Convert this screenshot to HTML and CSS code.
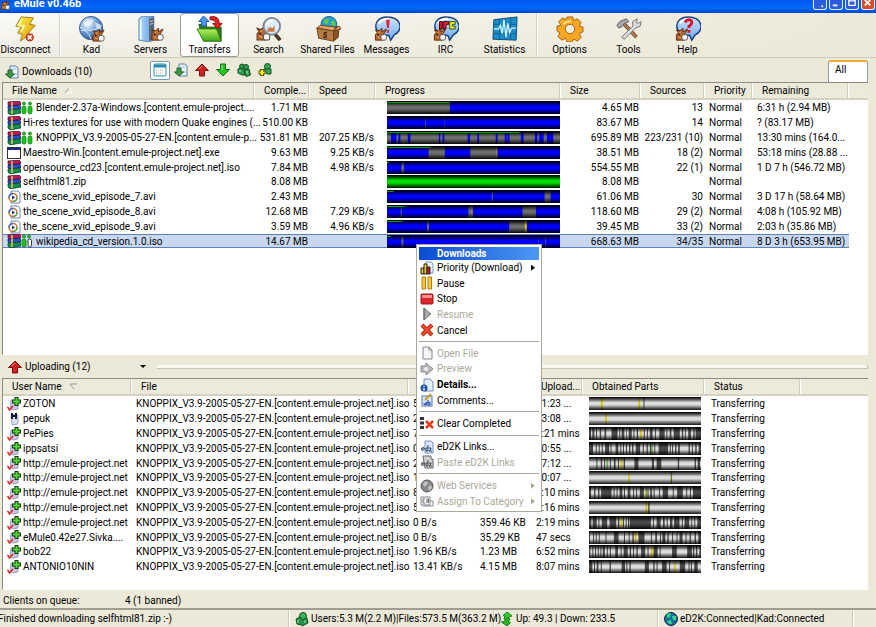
FILE: index.html
```html
<!DOCTYPE html>
<html lang="en">
<head>
    <meta charset="UTF-8">
    <meta name="viewport" content="width=device-width, initial-scale=1.0">
    <title>eMule v0.46b</title>
    <link rel="stylesheet" href="styles.css">
</head>
<body>

    <svg class="sprite" aria-hidden="true">
        <defs>
            <linearGradient id="gShade" x1="0" y1="0" x2="0" y2="1">
                <stop offset="0" stop-color="#000" stop-opacity="1"/>
                <stop offset="0.15" stop-color="#000" stop-opacity="0.7"/>
                <stop offset="0.42" stop-color="#000" stop-opacity="0"/>
                <stop offset="0.6" stop-color="#000" stop-opacity="0"/>
                <stop offset="0.9" stop-color="#000" stop-opacity="0.7"/>
                <stop offset="1" stop-color="#000" stop-opacity="0.9"/>
            </linearGradient>
            <linearGradient id="gBubble" x1="0" y1="0" x2="0" y2="1">
                <stop offset="0" stop-color="#cfe4ff"/>
                <stop offset="1" stop-color="#6fa8ee"/>
            </linearGradient>
            <linearGradient id="gBolt" x1="0" y1="0" x2="1" y2="1">
                <stop offset="0" stop-color="#fff04a"/>
                <stop offset="1" stop-color="#dc9a08"/>
            </linearGradient>
            <radialGradient id="gGlobe" cx="0.35" cy="0.3" r="0.8">
                <stop offset="0" stop-color="#fff"/>
                <stop offset="0.5" stop-color="#6c9fd8"/>
                <stop offset="1" stop-color="#1d4580"/>
            </radialGradient>
            <linearGradient id="gServer" x1="0" y1="0" x2="1" y2="0">
                <stop offset="0" stop-color="#b4dcff"/>
                <stop offset="1" stop-color="#5b9ade"/>
            </linearGradient>
            <linearGradient id="gFolder" x1="0" y1="0" x2="0" y2="1">
                <stop offset="0" stop-color="#baf060"/>
                <stop offset="1" stop-color="#3fa818"/>
            </linearGradient>
        </defs>
        <symbol id="mule" viewBox="0 0 14 15">
            <path d="M1 14 1 8 3 6 1 3 5 4 8 1 8 5 13 2 11 6 9 8 9 14z" fill="#b5662c" stroke="#5e2c10"/>
            <path d="M4 6 6 5M3 10 6 12" stroke="#f0b070" fill="none"/>
            <rect x="7" y="8" width="6" height="6" rx="2" fill="#f5f5f5" stroke="#555"/>
            <circle cx="4" cy="8" r="1" fill="#2c1204"/>
        </symbol>
        <symbol id="disconnect" viewBox="0 0 28 28">
            <path d="M9 1 22 2 18 9 24 10 16 19 18 20 8 27 10 20 5 18 9 12 3 11z" fill="url(#gBolt)" stroke="#a07c10"/>
            <path d="M10 3 6 10 12 11 9 17" stroke="#fffaa8" stroke-width="2" fill="none"/>
            <circle cx="18" cy="23" r="4" fill="#e8553c" stroke="#a02c1c"/>
            <path d="M16 21 20 25M20 21 16 25" stroke="#fff" stroke-width="1.5"/>
        </symbol>
        <symbol id="kad" viewBox="0 0 28 28">
            <circle cx="13" cy="13" r="12.5" fill="url(#gGlobe)" stroke="#31588c"/>
            <path d="M5 8Q10 2 16 4L13 10 7 12zM17 7 23 9 24 15 19 14z" fill="#e9f2fb" opacity="0.75"/>
            <path d="M2 16Q9 13 13 25M1 12Q13 20 25 10" stroke="#dceaf8" fill="none"/>
            <use href="#mule" x="14" y="13" width="14" height="15"/>
        </symbol>
        <symbol id="servers" viewBox="0 0 28 28">
            <path d="M1 3 5 0 17 0 17 25 13 28 1 26z" fill="url(#gServer)" stroke="#5d83ac"/>
            <path d="M12 3 17 1 17 25 12 27z" fill="#59636f"/>
            <path d="M13 6 16 5M13 9 16 8" stroke="#dfe8f0"/>
            <path d="M3 4 3 25" stroke="#e6f5ff" stroke-width="2"/>
            <use href="#mule" x="14" y="12" width="14" height="15"/>
        </symbol>
        <symbol id="transfers" viewBox="0 0 30 28">
            <path d="M3 9 10 9 12 12 27 12 27 27 8 27z" fill="#2c7d17" stroke="#1a540d"/>
            <path d="M1 14 22 14 27 27 8 27z" fill="url(#gFolder)" stroke="#317d12"/>
            <path d="M8 0 14 6 11 6 11 11 6 11 6 6 3 6z" fill="#4a9af0" stroke="#144d98"/>
            <path d="M15 1Q25-1 25 8L28 8 23 14 18 8 21 8Q21 4 15 4z" fill="#e12420" stroke="#8c0c0c"/>
        </symbol>
        <symbol id="search" viewBox="0 0 28 28">
            <use href="#mule" x="0" y="10" width="16" height="17"/>
            <path d="M20 19 26 26" stroke="#4a3428" stroke-width="4"/>
            <circle cx="17" cy="11" r="9" fill="#d7eaff" fill-opacity="0.8" stroke="#7c8793" stroke-width="2"/>
            <path d="M12 9Q14 5 18 5" stroke="#fff" stroke-width="2" fill="none"/>
            <path d="M12 17 14 12 18 13 20 10 20 17z" fill="#c77b44"/>
        </symbol>
        <symbol id="shared" viewBox="0 0 28 28">
            <circle cx="15" cy="9" r="8.500" fill="#2a9fd0" stroke="#165a80"/>
            <path d="M10 4 15 3 14 8 10 9zM17 6 21 5 22 10 18 11z" fill="#60cc4a"/>
            <path d="M2 13 20 16 20 27 4 24z" fill="#b87a45" stroke="#6b3c18"/>
            <path d="M20 16 26 12 25 23 20 27z" fill="#8a5228" stroke="#6b3c18"/>
            <path d="M2 13 6 10 24 12 20 16zM20 16 28 14 26 11 22 12z" fill="#dda66d" stroke="#6b3c18"/>
            <path d="M13 18Q9 17 10 20 13 20 12 23 11 24 9 22" stroke="#3f220c" stroke-width="1.500" fill="none"/>
        </symbol>
        <symbol id="bubble" viewBox="0 0 28 28">
            <path d="M14 1C31 1 31 17 22 20L18 26 16 21C-3 21-2 1 14 1z" fill="url(#gBubble)" stroke="#123f7c" stroke-width="1.500"/>
            <path d="M5 8Q9 3 16 3" stroke="#fff" stroke-width="2" fill="none"/>
            <use href="#mule" x="0" y="12" width="15" height="15"/>
        </symbol>
        <symbol id="messages" viewBox="0 0 28 28">
            <use href="#bubble" width="28" height="28"/>
            <path d="M13 4 17 4 16 13 14 13zM14 15h2v3h-2z" fill="#e0203c"/>
        </symbol>
        <symbol id="irc" viewBox="0 0 28 28">
            <use href="#bubble" width="28" height="28"/>
            <path d="M7 6h3v8h-3z" fill="#d81c24" stroke="#400"/>
            <path d="M11 6h6v3h-3v5h-3z" fill="#e23" stroke="#400"/>
            <path d="M18 6h6v3h-3v2h3v3h-6z" fill="#f5e81c" stroke="#252"/>
        </symbol>
        <symbol id="statistics" viewBox="0 0 28 28">
            <path d="M2 4 27 1 26 26 1 25z" fill="#1c8dc8" stroke="#0d4770"/>
            <path d="M8 3v22M14 3v22M20 2v23M2 9h24M2 19h24" stroke="#0e5f96"/>
            <path d="M2 14 7 14 9 10 11 19 13 4 15 23 17 8 19 18 21 13 26 13" stroke="#c8f4ff" stroke-width="1.500" fill="none"/>
        </symbol>
        <symbol id="options" viewBox="0 0 28 28">
            <g fill="#f5a623" stroke="#a35a08">
                <path d="M11 1h6l1 4 4-2 4 4-2 4 4 1v5l-4 2 2 4-4 4-4-2-2 3h-5l-2-4-4 2-4-4 2-4-3-2v-5l4-1-2-4 4-4 4 2z"/>
                <circle cx="14" cy="14" r="5" fill="#f0eee0"/>
            </g>
            <path d="M7 9Q10 5 15 6" stroke="#ffe08c" stroke-width="2" fill="none"/>
        </symbol>
        <symbol id="tools" viewBox="0 0 28 28">
            <path d="M9 9 22 23" stroke="#6a4020" stroke-width="4"/>
            <path d="M9 9 22 23" stroke="#b9855a" stroke-width="2"/>
            <path d="M1 10 4 6 11 3 14 6 9 8 6 12 3 13z" fill="#a8a8ac" stroke="#5c5c60"/>
            <path d="M6 23 18 11 18 6 23 3 22 7 24 8 27 6 26 11 21 13 9 25z" fill="#dcdce0" stroke="#707074"/>
        </symbol>
        <symbol id="help" viewBox="0 0 28 28">
            <use href="#bubble" width="28" height="28"/>
            <path d="M11 7Q12 4 15 4 19 5 18 8 17 10 15 11V13M15 15v3" stroke="#e01028" stroke-width="3" fill="none"/>
        </symbol>

        <symbol id="doc-down" viewBox="0 0 14 14">
            <path d="M5 1h6l2 2v10H5z" fill="#eaf2fc" stroke="#5f7fae"/>
            <path d="M7 4h4M8 9h4" stroke="#9cb8de"/>
            <path d="M3 5h4v4h2.500L5 13 .5 9H3z" fill="#3f9a48" stroke="#1a5f24"/>
        </symbol>
        <symbol id="list" viewBox="0 0 14 14">
            <rect x="1" y="1" width="12" height="12" rx="1" fill="#fff" stroke="#2c8cae"/>
            <path d="M1 3h12" stroke="#2c8cae" stroke-width="3"/>
            <path d="M3 7h8M3 10h8" stroke="#90b8c8" stroke-dasharray="1 1"/>
        </symbol>
        <symbol id="up" viewBox="0 0 14 14">
            <path d="M7 1 13.500 7.500H9.500V13H4.500V7.500H.5z" fill="#cf2020" stroke="#7c1010"/>
            <path d="M7 3 4 6" stroke="#ff8c80"/>
        </symbol>
        <symbol id="down" viewBox="0 0 14 14">
            <path d="M7 13 13.500 6.500H9.500V1H4.500V6.500H.5z" fill="#26c426" stroke="#167016"/>
            <path d="M6 2V7" stroke="#94f084"/>
        </symbol>
        <symbol id="clients" viewBox="0 0 14 14">
            <g fill="#2f9c4c" stroke="#124f24">
                <circle cx="5" cy="3.500" r="2.500"/><circle cx="9" cy="4" r="2.500"/>
                <path d="M1 6 5 5 8 8 8 12H5L1 10zM7 7 12 6 13.500 12 9 13.500z"/>
            </g>
            <path d="M3 7v2M10 8v3" stroke="#a4e8b0"/>
        </symbol>
        <symbol id="client-add" viewBox="0 0 14 14">
            <circle cx="9.500" cy="3.500" r="3" fill="#38a854" stroke="#124f24"/>
            <path d="M6 6h7v5H9z" fill="#38a854" stroke="#124f24"/>
            <path d="M4 6v7M.5 9.500h7" stroke="#5b5a10" stroke-width="4"/>
            <path d="M4 7v5M1.500 9.500h5" stroke="#f4ec20" stroke-width="2"/>
        </symbol>
        <symbol id="user" viewBox="0 0 14 14">
            <circle cx="8" cy="4" r="3.500" fill="#3bb45c" stroke="#10501f"/>
            <path d="M1 7 5 5 8 8 12 6 13 11 8 13.500 2 12z" fill="#279046" stroke="#10501f"/>
            <path d="M3 8v3M10 8v3" stroke="#96e4a4"/>
        </symbol>
        <symbol id="updown" viewBox="0 0 14 14">
            <path d="M7 0 12 4 9.500 4.500 7 8 4 7 5 4 3 3.500z" fill="#2ed02e" stroke="#117c11"/>
            <path d="M7 14 1.500 10 4 9.500 7 5.500 10 7 8 10 10.500 10.500z" fill="#23bb23" stroke="#117c11"/>
        </symbol>
        <symbol id="world" viewBox="0 0 14 14">
            <circle cx="7" cy="7" r="6.500" fill="#1c6a9c" stroke="#0b2c40"/>
            <path d="M3 2 7 1 6 5 3 6zM8 4 12 4 12 8 9 8zM3 9 7 8 8 12 5 12z" fill="#2fd888"/>
        </symbol>

        <symbol id="rar" viewBox="0 0 14 14">
            <path d="M1 1 12 0 14 2V4L3 5 1 4z" fill="#b81c58" stroke="#400820" stroke-width=".7"/>
            <path d="M1 5 12 4 14 6V8L3 9 1 8z" fill="#2c50c0" stroke="#081440" stroke-width=".7"/>
            <path d="M1 9 12 8 14 10V12L3 14 1 12z" fill="#148c4c" stroke="#04381c" stroke-width=".7"/>
            <path d="M5 1v12" stroke="#e8c868" stroke-width="1.500"/>
        </symbol>
        <symbol id="exe" viewBox="0 0 14 14">
            <rect x=".5" y="1.500" width="13" height="11" fill="#fff" stroke="#333"/>
            <path d="M1 3h12" stroke="#182c90" stroke-width="2"/>
        </symbol>
        <symbol id="avi" viewBox="0 0 14 14">
            <path d="M4 1h7l2 2v10H4z" fill="#fff" stroke="#6c84b8"/>
            <circle cx="6" cy="7.500" r="4" fill="#fff" stroke="#d06c28" stroke-width="1.500"/>
            <path d="M2 7.500A4 4 0 0 1 6 3.500" stroke="#2f70d8" stroke-width="1.500" fill="none"/>
            <path d="M10 7.500A4 4 0 0 1 6 11.500" stroke="#3aa838" stroke-width="1.500" fill="none"/>
            <path d="M5 5.500 8 7.500 5 9.500z" fill="#202c60"/>
        </symbol>
        <symbol id="rated" viewBox="0 0 12 14">
            <g fill="#18c818" stroke="#087008" stroke-width=".7">
                <circle cx="3" cy="2.500" r="1.500"/><rect x="1" y="5" width="4" height="8" rx="2"/>
                <circle cx="9" cy="2.500" r="1.500"/><rect x="7" y="5" width="4" height="8" rx="2"/>
            </g>
        </symbol>
        <symbol id="rated-half" viewBox="0 0 12 14">
            <g fill="#18c818" stroke="#087008" stroke-width=".7">
                <circle cx="3" cy="2.500" r="1.500"/><rect x="1" y="5" width="4" height="8" rx="2"/>
                <circle cx="8" cy="2.500" r="1.500"/>
            </g>
            <rect x="7" y="5" width="3.500" height="8" rx="1.700" fill="#fff" stroke="#333"/>
        </symbol>
        <symbol id="peer" viewBox="0 0 14 14">
            <path d="M4 3 11 4 11 12 6 13 3 11z" fill="#c4c6e4" stroke="#8486a8" stroke-width=".7"/>
            <path d="M9.500 0v9M5 4.500h9" stroke="#0c3c0c" stroke-width="4"/>
            <path d="M9.500 1v7M6 4.500h7" stroke="#58d838" stroke-width="2"/>
            <path d="M.5 10 2.500 13 6 9" stroke="#e02020" stroke-width="1.500" fill="none"/>
        </symbol>
        <symbol id="peer-h" viewBox="0 0 14 14">
            <path d="M4 2 11 3 11 12 5 13z" fill="#d4dcf0" stroke="#8890b0" stroke-width=".7"/>
            <path d="M5 1v6M9 1v6M5 4h4" stroke="#181830" stroke-width="2"/>
        </symbol>

        <symbol id="m-priority" viewBox="0 0 14 14">
            <path d="M6 1h5l2 2v9H6z" fill="#eef4fc" stroke="#7894c0"/>
            <path d="M1 7h3v6H1z" fill="#e8c020" stroke="#222"/><path d="M4 3h3v10H4z" fill="#f0d030" stroke="#222"/><path d="M7 6h3v7H7z" fill="#b02030" stroke="#222"/>
        </symbol>
        <symbol id="m-pause" viewBox="0 0 14 14">
            <path d="M2 1h3.500v12H2zM8 1h3.500v12H8z" fill="#f8c838" stroke="#b47c10"/>
        </symbol>
        <symbol id="m-stop" viewBox="0 0 14 14">
            <rect x="1" y="2" width="12" height="10" rx="1" fill="#d8282c" stroke="#981418"/>
            <path d="M2 4.500h10" stroke="#f89090" stroke-width="3"/>
        </symbol>
        <symbol id="m-resume" viewBox="0 0 14 14">
            <path d="M4 1 11 7 4 13z" fill="#aaa" stroke="#777"/><path d="M4 1v12" stroke="#666"/>
        </symbol>
        <symbol id="m-cancel" viewBox="0 0 14 14">
            <path d="M2 2 12 12M12 2 2 12" stroke="#982010" stroke-width="4"/>
            <path d="M2 2 12 12M12 2 2 12" stroke="#f04828" stroke-width="2.500"/>
        </symbol>
        <symbol id="m-open" viewBox="0 0 14 14">
            <path d="M3 1h6l3 3v9H3z" fill="#f4f4f4" stroke="#888"/><path d="M9 1v3h3" fill="none" stroke="#888"/>
        </symbol>
        <symbol id="m-preview" viewBox="0 0 14 14">
            <path d="M1 4h5V1l7 6-7 6v-3H1z" fill="#bbb" stroke="#888"/><circle cx="6" cy="7" r="2" fill="#eee"/>
        </symbol>
        <symbol id="m-details" viewBox="0 0 14 14">
            <path d="M4 1h6l3 3v9H4z" fill="#e4eefc" stroke="#6c8cc0"/>
            <circle cx="4" cy="10" r="3.500" fill="#1c50a8"/><path d="M4 8v1M4 10v2.500" stroke="#fff" stroke-width="1.500"/>
        </symbol>
        <symbol id="m-comments" viewBox="0 0 14 14">
            <rect x="2" y="3" width="10" height="10" fill="#d4e4fa" stroke="#5478b4"/>
            <path d="M4 10a1.500 1.500 0 1 0 2-1v3M8 7v5M8 9.500h2v2.500H8" stroke="#1c409c" fill="none"/>
            <path d="M5 7 11 1" stroke="#c89c20" stroke-width="2"/>
        </symbol>
        <symbol id="m-clear" viewBox="0 0 14 14">
            <path d="M0 1h4v3H0zM0 5.500h4v3H0zM0 10h4v3H0z" fill="#333"/>
            <path d="M6 5 13 12M13 5 6 12" stroke="#e03c1c" stroke-width="2.500"/>
        </symbol>
        <symbol id="m-links" viewBox="0 0 14 14">
            <path d="M5 1h6l2 2v10H5z" fill="#dce8fa" stroke="#7490c0"/>
            <path d="M1 9h3.500a1.500 1.500 0 1 0-1 1.500M8 5v6H6V8h2M9 8h2v1l-2 2h3" stroke="#283c68" fill="none"/>
        </symbol>
        <symbol id="m-paste" viewBox="0 0 14 14">
            <path d="M3 1h8v3h2v9H5z" fill="#d0d0d0" stroke="#666"/>
            <path d="M1 9h3.500a1.500 1.500 0 1 0-1 1.500M8 5v6H6V8h2M9 8h2v1l-2 2h3" stroke="#444" fill="none"/>
        </symbol>
        <symbol id="m-web" viewBox="0 0 14 14">
            <circle cx="7" cy="7" r="6" fill="#888" stroke="#555"/>
            <path d="M3 4 7 2 8 5 4 8zM8 8 11 6 12 9 9 12z" fill="#c4c4c4"/>
        </symbol>
        <symbol id="m-category" viewBox="0 0 14 14">
            <path d="M1 3h9v8H1z" fill="#eee" stroke="#888"/><path d="M10 7h3v5H3" fill="none" stroke="#888"/>
            <path d="M5 5H3v4h2M7 9V5h1.500v4M7 7h1" stroke="#777" fill="none"/>
        </symbol>
    </svg>

    <header class="titlebar">
        <svg class="title-icon"><use href="#mule"/></svg>
        <h1>eMule v0.46b</h1>
        <div class="window-buttons">
            <button type="button" aria-label="Tray"><svg viewBox="0 0 13 10"><path d="M8 7h2" stroke="#fff" stroke-width="2"/></svg></button>
            <button type="button" aria-label="Minimize"><svg viewBox="0 0 13 10"><path d="M3 6h5" stroke="#fff" stroke-width="2"/></svg></button>
            <button type="button" aria-label="Maximize"><svg viewBox="0 0 13 10"><path d="M3 0v6h7v-6M3 1h7" stroke="#fff" stroke-width="1.500" fill="none"/></svg></button>
            <button type="button" class="close" aria-label="Close"><svg viewBox="0 0 13 10"><path d="M3 0 9 6M9 0 3 6" stroke="#fff" stroke-width="2"/></svg></button>
        </div>
    </header>

    <nav class="toolbar">
        <button type="button" class="connect"><svg><use href="#disconnect"/></svg>Disconnect</button>
        <span class="divider"></span>
        <button type="button"><svg><use href="#kad"/></svg>Kad</button>
        <button type="button"><svg><use href="#servers"/></svg>Servers</button>
        <button type="button" class="active"><svg><use href="#transfers"/></svg>Transfers</button>
        <button type="button"><svg><use href="#search"/></svg>Search</button>
        <button type="button"><svg><use href="#shared"/></svg>Shared Files</button>
        <button type="button"><svg><use href="#messages"/></svg>Messages</button>
        <button type="button"><svg><use href="#irc"/></svg>IRC</button>
        <button type="button"><svg><use href="#statistics"/></svg>Statistics</button>
        <span class="divider wide"></span>
        <button type="button"><svg><use href="#options"/></svg>Options</button>
        <button type="button"><svg><use href="#tools"/></svg>Tools</button>
        <button type="button"><svg><use href="#help"/></svg>Help</button>
    </nav>

    <main class="transfer-window">
        <div class="list-bar">
            <h2><svg class="icon"><use href="#doc-down"/></svg>Downloads (10)</h2>
            <div class="view-buttons">
                <button type="button" class="active" aria-label="Split view"><svg class="icon"><use href="#list"/></svg></button>
                <button type="button" aria-label="Downloads"><svg class="icon"><use href="#doc-down"/></svg></button>
                <button type="button" aria-label="Uploading"><svg class="icon"><use href="#up"/></svg></button>
                <button type="button" aria-label="Downloading clients"><svg class="icon"><use href="#down"/></svg></button>
                <button type="button" aria-label="On queue"><svg class="icon"><use href="#clients"/></svg></button>
                <button type="button" aria-label="Known clients"><svg class="icon"><use href="#client-add"/></svg></button>
            </div>
            <button type="button" class="tab">All</button>
        </div>

        <section class="list downloads">
            <table>
                <colgroup>
                    <col class="c-name"><col class="c-completed"><col class="c-speed"><col class="c-progress">
                    <col class="c-size"><col class="c-sources"><col class="c-priority"><col class="c-remaining"><col>
                </colgroup>
                <thead>
                    <tr>
                        <th>File Name <svg class="sort" viewBox="0 0 7 7"><path d="M0 6 4 1" stroke="#999"/><path d="M4 1 7 6H1" stroke="#fff" fill="none"/></svg></th>
                        <th>Comple...</th>
                        <th>Speed</th>
                        <th>Progress</th>
                        <th>Size</th>
                        <th>Sources</th>
                        <th>Priority</th>
                        <th>Remaining</th>
                        <th></th>
                    </tr>
                </thead>
                <tbody id="downloadRows"></tbody>
            </table>
        </section>

        <div class="splitter">
            <h2><svg class="icon"><use href="#up"/></svg>Uploading (12)</h2>
            <button type="button" class="drop" aria-label="Switch list"></button>
            <span class="grip"></span>
        </div>

        <section class="list uploads">
            <table>
                <colgroup>
                    <col class="u-name"><col class="u-file"><col class="u-speed"><col class="u-sent">
                    <col class="u-time"><col class="u-parts"><col class="u-status"><col>
                </colgroup>
                <thead>
                    <tr>
                        <th>User Name <svg class="sort" viewBox="0 0 7 7"><path d="M4 6 0 1H7" stroke="#999" fill="none"/></svg></th>
                        <th>File</th>
                        <th>Speed</th>
                        <th>Transf...</th>
                        <th>Upload...</th>
                        <th>Obtained Parts</th>
                        <th>Status</th>
                        <th></th>
                    </tr>
                </thead>
                <tbody id="uploadRows"></tbody>
            </table>
        </section>

        <div class="queue">
            <span class="queue-label">Clients on queue:</span>
            <span>4 (1 banned)</span>
        </div>
    </main>

    <footer class="statusbar">
        <span class="status-log">Finished downloading selfhtml81.zip :-)</span>
        <span class="status-users"><svg class="icon"><use href="#user"/></svg>Users:5.3 M(2.2 M)|Files:573.5 M(363.2 M)</span>
        <span class="status-rate"><svg class="icon"><use href="#updown"/></svg>Up: 49.3 | Down: 233.5</span>
        <span class="status-net"><svg class="icon"><use href="#world"/></svg>eD2K:Connected|Kad:Connected</span>
        <span class="status-end"></span>
    </footer>

    <div class="menu" role="menu">
        <div class="menu-title">Downloads</div>
        <button type="button" class="sub"><svg class="icon"><use href="#m-priority"/></svg>Priority (Download)</button>
        <button type="button"><svg class="icon"><use href="#m-pause"/></svg>Pause</button>
        <button type="button"><svg class="icon"><use href="#m-stop"/></svg>Stop</button>
        <button type="button" disabled><svg class="icon"><use href="#m-resume"/></svg>Resume</button>
        <button type="button"><svg class="icon"><use href="#m-cancel"/></svg>Cancel</button>
        <hr>
        <button type="button" disabled><svg class="icon"><use href="#m-open"/></svg>Open File</button>
        <button type="button" disabled><svg class="icon"><use href="#m-preview"/></svg>Preview</button>
        <button type="button" class="default"><svg class="icon"><use href="#m-details"/></svg>Details...</button>
        <button type="button"><svg class="icon"><use href="#m-comments"/></svg>Comments...</button>
        <hr>
        <button type="button"><svg class="icon"><use href="#m-clear"/></svg>Clear Completed</button>
        <hr>
        <button type="button"><svg class="icon"><use href="#m-links"/></svg>eD2K Links...</button>
        <button type="button" disabled><svg class="icon"><use href="#m-paste"/></svg>Paste eD2K Links</button>
        <hr>
        <button type="button" class="sub" disabled><svg class="icon"><use href="#m-web"/></svg>Web Services</button>
        <button type="button" class="sub" disabled><svg class="icon"><use href="#m-category"/></svg>Assign To Category</button>
    </div>

    <script src="script.js"></script>
</body>
</html>
```

FILE: styles.css
```css
* {
    box-sizing: border-box;
}
body {
    display: flex;
    flex-direction: column;
    min-height: 100vh;
    margin: 0;
    overflow: hidden;
    background-color: #ece9d8;
    color: #000;
    font-family: Roboto, Tahoma, "DejaVu Sans Condensed", sans-serif;
    font-size: 10px;
    line-height: 13px;
    white-space: nowrap;
}
button {
    margin: 0;
    padding: 0;
    border: none;
    background: none;
    color: inherit;
    font: inherit;
    white-space: nowrap;
}
h2 {
    display: flex;
    align-items: center;
    gap: 3px;
    margin: 0;
    font-size: 10px;
    font-weight: normal;
}
.sprite {
    position: absolute;
    width: 0;
    height: 0;
}
.icon {
    flex: none;
    width: 14px;
    height: 14px;
}

/* title bar */
.titlebar {
    display: flex;
    align-items: flex-start;
    height: 13px;
    background: linear-gradient(#0058ee, #0068ff 60%, #0048c8);
    overflow: hidden;
}
.title-icon {
    width: 11px;
    height: 10px;
}
.titlebar h1 {
    flex: 1;
    margin: 0 0 0 3px;
    color: #fff;
    font-size: 11px;
    line-height: 8px;
}
.window-buttons {
    display: flex;
    gap: 2px;
    margin-right: 1px;
}
.window-buttons button {
    width: 14px;
    height: 10px;
    border: 1px solid #e4ecff;
    border-top: none;
    border-radius: 0 0 3px 3px;
    background-color: #2c5cdc;
}
.window-buttons .close {
    background-color: #dc4c24;
}
.window-buttons svg {
    display: block;
    width: 12px;
    height: 9px;
}

/* main toolbar */
.toolbar {
    display: flex;
    height: 45px;
    border-bottom: 1px solid #d0ccba;
    background: linear-gradient(90deg, rgba(236, 233, 216, 0), #ece9d8), linear-gradient(#fbfbf8, #efede2);
}
.toolbar button {
    display: flex;
    flex: none;
    flex-direction: column;
    align-items: center;
    width: 59px;
    padding-top: 2px;
    border: 1px solid transparent;
}
.toolbar .connect {
    width: 51px;
    margin-right: 8px;
}
.toolbar .active {
    border-color: #9c9c94;
    border-radius: 3px;
    background-color: #fff;
}
.toolbar svg {
    width: 30px;
    height: 27px;
    margin-bottom: 1px;
}
.divider {
    width: 2px;
    margin: 1px 1px 1px 0;
    border-left: 1px solid #d4d0c0;
    border-right: 1px solid #fff;
}
.toolbar .wide {
    margin: 1px 2px;
}

/* transfer window */
.transfer-window {
    display: flex;
    flex: 1;
    flex-direction: column;
    padding: 0 8px 0 2px;
}
.list-bar {
    display: flex;
    align-items: center;
    height: 24px;
    padding-left: 3px;
}
.list-bar h2 {
    width: 145px;
    padding-top: 3px;
}
.view-buttons {
    display: flex;
    gap: 1px;
    flex: 1;
}
.view-buttons button {
    display: grid;
    place-items: center;
    width: 20px;
    height: 19px;
}
.view-buttons .active {
    border: 1px solid #7c98b8;
    border-radius: 2px;
    background-color: #fff;
}
.tab {
    align-self: flex-end;
    width: 40px;
    height: 22px;
    padding: 0 6px 6px;
    border: 1px solid #919b9c;
    border-top: 2px solid #f0a838;
    border-bottom: none;
    border-radius: 3px 3px 0 0;
    background-color: #fff;
    text-align: left;
}
.list {
    border: 1px solid #8c8c84;
    border-right: none;
    border-bottom-color: #fff;
    background-color: #fff;
}
.downloads {
    flex: 1;
}
.uploads {
    padding-bottom: 15px;
}
table {
    width: 100%;
    border-collapse: separate;
    border-spacing: 0;
    table-layout: fixed;
}
.c-name { width: 252px; }
.c-completed { width: 55px; }
.c-speed { width: 66px; }
.c-progress { width: 185px; }
.c-size { width: 80px; }
.c-sources { width: 64px; }
.c-priority { width: 48px; }
.c-remaining { width: 96px; }
.u-name { width: 129px; }
.u-file { width: 277px; }
.u-speed { width: 67px; }
.u-sent { width: 56px; }
.u-time { width: 51px; }
.u-parts { width: 122px; }
.u-status { width: 96px; }
th {
    height: 17px;
    padding: 0 0 0 9px;
    border-bottom: 2px solid #d6d2c2;
    background-color: #ebeadb;
    box-shadow: inset -1px 0 #fff, inset -2px 0 #cfccbc;
    font-weight: normal;
    text-align: left;
}
th:last-child {
    box-shadow: none;
}
.sort {
    width: 7px;
    height: 7px;
    margin-left: 6px;
}
td {
    height: 15px;
    padding: 0 4px;
}
tr:nth-child(5n) td {
    height: 14px;
}
.num {
    padding: 0 2px;
    text-align: right;
}
.named {
    display: flex;
    align-items: center;
    gap: 2px;
    height: 14px;
}
.named .rating {
    width: 12px;
    margin: 0 1px 0 -2px;
}
.bar-cell {
    padding: 0 1px 0 11px;
}
.uploads .bar-cell {
    padding: 0 4px 0 6px;
}
.bar {
    display: block;
    width: 100%;
    height: 13px;
}
.status {
    padding-left: 6px;
}
.selected td {
    background-color: #c8d8f0;
    box-shadow: inset 0 1px #5c80c0, inset 0 -1px #5c80c0;
}
.splitter {
    display: flex;
    align-items: center;
    height: 23px;
    padding-left: 6px;
}
.splitter h2 {
    width: 132px;
}
.drop {
    width: 6px;
    height: 3px;
    background-color: #000;
    clip-path: polygon(0 0, 100% 0, 50% 100%);
}
.grip {
    flex: 1;
    height: 4px;
    margin-left: 11px;
    border: 1px solid #c8c4b4;
    border-width: 0 1px 1px 0;
    background-color: #f8f7f0;
}
.queue {
    display: flex;
    padding: 4px 1px 1px;
}
.queue-label {
    width: 122px;
}

/* status bar */
.statusbar {
    display: flex;
    height: 19px;
    border-top: 2px solid #a09e90;
    overflow: hidden;
}
.statusbar span {
    display: flex;
    flex: none;
    align-items: center;
    gap: 2px;
    padding-left: 5px;
    border-right: 1px solid #fff;
    box-shadow: inset -1px 0 #cfccbc;
}
.statusbar .status-log {
    width: 290px;
    padding: 0;
    text-indent: -2px;
}
.status-users { width: 205px; }
.status-rate { width: 164px; }
.status-net { width: 195px; }
.statusbar .status-end {
    flex: 1;
    border: none;
    box-shadow: none;
}

/* context menu */
.menu {
    position: absolute;
    top: 244px;
    left: 416px;
    display: flex;
    flex-direction: column;
    width: 126px;
    height: 268px;
    padding: 2px;
    border: 1px solid #aca899;
    background-color: #fff;
}
.menu-title {
    height: 13px;
    padding-left: 18px;
    background: linear-gradient(90deg, #0a4cd0, #4c98f4);
    color: #fff;
    font-weight: bold;
}
.menu button {
    display: flex;
    flex: 2;
    align-items: center;
    gap: 3px;
    min-height: 0;
    padding-left: 1px;
    text-align: left;
}
.menu button:disabled {
    color: #aca899;
}
.menu .default {
    font-weight: bold;
}
.menu .sub::after {
    width: 4px;
    height: 6px;
    margin: 0 4px 0 auto;
    background-color: currentColor;
    clip-path: polygon(0 0, 100% 50%, 0 100%);
    content: "";
}
.menu hr {
    flex: 1;
    width: 100%;
    margin: 0;
    border: none;
    background: linear-gradient(#aca899, #aca899) center / 100% 1px no-repeat;
}
```

FILE: script.js
```js
const BLUE = '#0000ff', GRAY = '#6c6c6c', YELLOW = '#d8c800', DARK = '#484848', GREEN = '#6fae50';

// segments are [start, width, color]; "done" is the length of the green line on top
const downloads = [
    { icon: 'rar', rating: 'rated', name: 'Blender-2.37a-Windows.[content.emule-project....', completed: '1.71 MB', speed: '', size: '4.65 MB', sources: '13', remaining: '6:31 h (2.94 MB)', done: 188, parts: [[0, 188, GRAY]] },
    { icon: 'rar', name: 'Hi-res textures for use with modern Quake engines (...', completed: '510.00 KB', speed: '', size: '83.67 MB', sources: '14', remaining: '? (83.17 MB)', done: 0, parts: [[114, 2, GRAY], [172, 1, GRAY]] },
    { icon: 'rar', rating: 'rated', name: 'KNOPPIX_V3.9-2005-05-27-EN.[content.emule-p...', completed: '531.81 MB', speed: '207.25 KB/s', size: '695.89 MB', sources: '223/231 (10)', remaining: '13:30 mins (164.0...', done: 395, parts: [[0, 12, GRAY], [28, 6, GRAY], [40, 22, GRAY], [70, 85, GRAY], [159, 7, GRAY], [171, 70, GRAY], [248, 22, GRAY], [275, 50, GRAY], [330, 22, GRAY], [358, 2, GRAY], [366, 34, GRAY], [408, 34, GRAY], [449, 6, GRAY], [468, 10, GRAY], [497, 20, GRAY]] },
    { icon: 'exe', name: 'Maestro-Win.[content.emule-project.net].exe', completed: '9.63 MB', speed: '9.25 KB/s', size: '38.51 MB', sources: '18 (2)', remaining: '53:18 mins (28.88 ...', done: 128, parts: [[124, 49, GRAY], [249, 82, GRAY], [326, 3, '#a08060']] },
    { icon: 'rar', name: 'opensource_cd23.[content.emule-project.net].iso', completed: '7.84 MB', speed: '4.98 KB/s', size: '554.55 MB', sources: '22 (1)', remaining: '1 D 7 h (546.72 MB)', done: 6, parts: [[43, 8, GRAY]] },
    { icon: 'rar', name: 'selfhtml81.zip', completed: '8.08 MB', speed: '', size: '8.08 MB', sources: '', remaining: '', done: 0, parts: [[0, 517, '#00e000']] },
    { icon: 'avi', name: 'the_scene_xvid_episode_7.avi', completed: '2.43 MB', speed: '', size: '61.06 MB', sources: '30', remaining: '3 D 17 h (58.64 MB)', done: 20, parts: [[313, 3, GRAY], [471, 18, GRAY]] },
    { icon: 'avi', name: 'the_scene_xvid_episode_8.avi', completed: '12.68 MB', speed: '7.29 KB/s', size: '118.60 MB', sources: '29 (2)', remaining: '4:08 h (105.92 MB)', done: 54, parts: [[41, 3, GRAY], [243, 14, GRAY], [252, 3, '#b09040'], [405, 40, GRAY]] },
    { icon: 'avi', name: 'the_scene_xvid_episode_9.avi', completed: '3.59 MB', speed: '4.96 KB/s', size: '39.45 MB', sources: '33 (2)', remaining: '2:03 h (35.86 MB)', done: 46, parts: [[121, 3, YELLOW], [365, 46, GRAY], [411, 7, YELLOW]] },
    { icon: 'rar', rating: 'rated-half', name: 'wikipedia_cd_version.1.0.iso', completed: '14.67 MB', speed: '', size: '668.63 MB', sources: '34/35', remaining: '8 D 3 h (653.95 MB)', done: 10, parts: [[43, 6, GRAY], [452, 1, GRAY], [473, 2, GRAY]], selected: true }
];

// stripes: dark areas as flat list of start, width pairs
const uploads = [
    { name: 'ZOTON', speed: '5.12 KB/s', sent: '1.42 MB', time: '11:23 ...', dark: [162, 3], marks: [[35, 6, YELLOW], [147, 5, YELLOW]] },
    { name: 'pepuk', icon: 'peer-h', speed: '2.35 KB/s', sent: '1.10 MB', time: '13:08 ...', dark: [], marks: [[48, 5, YELLOW]] },
    { name: 'PePies', speed: '7.04 KB/s', sent: '2.51 MB', time: '7:21 mins', dark: [0, 6, 10, 6, 21, 3, 32, 4, 46, 5, 67, 18, 90, 3, 97, 8, 110, 2, 118, 9, 132, 3, 142, 4, 163, 3, 172, 3, 181, 8, 196, 3, 209, 16, 230, 3, 240, 5, 252, 18, 276, 4, 285, 3, 295, 8, 310, 4, 317, 16], marks: [[152, 5, YELLOW]] },
    { name: 'ippsatsi', speed: '0 B/s', sent: '1.33 MB', time: '10:55 ...', dark: [0, 12, 20, 3, 29, 3, 38, 3, 48, 12, 64, 3, 79, 8, 93, 3, 101, 3, 110, 3, 119, 4, 128, 4, 139, 13, 160, 3, 171, 4, 181, 4, 194, 3, 207, 28, 240, 3, 247, 3, 256, 4, 265, 5, 296, 4, 306, 3, 316, 4, 326, 7], marks: [[185, 5, GREEN]] },
    { name: 'http://emule-project.net', speed: '2.71 KB/s', sent: '1.28 MB', time: '17:12 ...', dark: [22, 3, 35, 4, 45, 3, 62, 3, 74, 5, 86, 3, 103, 4, 135, 12, 187, 6, 201, 14, 264, 4, 314, 4, 323, 7], marks: [[52, 5, GREEN], [94, 5, YELLOW]] },
    { name: 'http://emule-project.net', speed: '1.80 KB/s', sent: '1.02 MB', time: '10:07 ...', dark: [], marks: [[117, 4, YELLOW], [243, 4, '#708020']] },
    { name: 'http://emule-project.net', speed: '8.22 KB/s', sent: '2.07 MB', time: '8:10 mins', dark: [0, 6, 15, 4, 27, 4, 36, 31, 73, 3, 82, 3, 91, 8, 104, 3, 115, 8, 131, 3, 140, 3, 151, 12, 174, 3, 182, 5, 192, 3, 208, 3, 219, 16, 249, 3, 262, 17, 289, 3, 300, 3, 309, 24], marks: [[168, 5, '#88a020']] },
    { name: 'http://emule-project.net', speed: '5.50 KB/s', sent: '1.90 MB', time: '6:16 mins', dark: [176, 4], marks: [[168, 5, YELLOW]] },
    { name: 'http://emule-project.net', speed: '0 B/s', sent: '359.46 KB', time: '2:19 mins', dark: [0, 7, 11, 12, 28, 3, 38, 16, 61, 20, 86, 4, 101, 3, 109, 3, 116, 4, 122, 62, 190, 3, 201, 12, 220, 5, 231, 3, 241, 7, 253, 16, 276, 3, 284, 14, 304, 3, 313, 3, 322, 11], marks: [[94, 5, YELLOW]] },
    { name: 'eMule0.42e27.Sivka....', speed: '0 B/s', sent: '35.29 KB', time: '47 secs', dark: [0, 3, 12, 3, 20, 3, 29, 3, 49, 3, 74, 14, 104, 3, 118, 3, 129, 4, 147, 18, 184, 3, 197, 5, 211, 3, 218, 9, 233, 4, 247, 3, 260, 3, 269, 9, 287, 3, 299, 4, 314, 4, 325, 8], marks: [[136, 5, YELLOW]] },
    { name: 'bob22', speed: '1.96 KB/s', sent: '1.23 MB', time: '6:52 mins', dark: [0, 4, 10, 3, 18, 3, 26, 3, 34, 3, 41, 6, 53, 3, 62, 3, 78, 8, 94, 3, 103, 12, 121, 4, 131, 3, 141, 4, 155, 12, 174, 3, 192, 12, 210, 3, 247, 14, 292, 14, 309, 4, 318, 4, 328, 5], marks: [[184, 5, YELLOW]] },
    { name: 'ANTONIO10NIN', speed: '13.41 KB/s', sent: '4.15 MB', time: '8:07 mins', dark: [0, 10, 15, 3, 23, 5, 35, 3, 61, 4, 97, 10, 111, 3, 120, 4, 166, 12, 191, 4, 201, 3, 217, 14, 238, 3, 270, 16, 296, 3, 303, 3, 313, 10], marks: [[254, 4, YELLOW]] }
];

function bar(width, base, parts, done) {
    const rects = parts.map(([x, w, color]) => `<rect x="${x}" width="${w}" height="13" fill="${color}"/>`).join('');
    return `<svg class="bar" viewBox="0 0 ${width} 13" preserveAspectRatio="none">
        <rect width="${width}" height="13" fill="${base}"/>${rects}
        <rect width="${width}" height="13" fill="url(#gShade)"/>
        ${done ? `<rect y="1" width="${done}" height="1" fill="#00a000"/>` : ''}
    </svg>`;
}

function icon(id, extra = '') {
    return `<svg class="icon ${extra}"><use href="#${id}"/></svg>`;
}

document.getElementById('downloadRows').innerHTML = downloads.map(d => `
    <tr class="${d.selected ? 'selected' : ''}">
        <td><div class="named">${icon(d.icon)}${d.rating ? icon(d.rating, 'rating') : ''}${d.name}</div></td>
        <td class="num">${d.completed}</td>
        <td class="num">${d.speed}</td>
        <td class="bar-cell">${bar(517, BLUE, d.parts, d.done)}</td>
        <td class="num">${d.size}</td>
        <td class="num">${d.sources}</td>
        <td>Normal</td>
        <td>${d.remaining}</td>
    </tr>`).join('');

document.getElementById('uploadRows').innerHTML = uploads.map(u => {
    const parts = [];
    for (let i = 0; i < u.dark.length; i += 2) {
        parts.push([u.dark[i], u.dark[i + 1], DARK]);
    }
    return `
    <tr>
        <td><div class="named">${icon(u.icon || 'peer')}${u.name}</div></td>
        <td>KNOPPIX_V3.9-2005-05-27-EN.[content.emule-project.net].iso</td>
        <td>${u.speed}</td>
        <td>${u.sent}</td>
        <td>${u.time}</td>
        <td class="bar-cell">${bar(333, '#dcdcdc', parts.concat(u.marks))}</td>
        <td class="status">Transferring</td>
    </tr>`;
}).join('');
```
